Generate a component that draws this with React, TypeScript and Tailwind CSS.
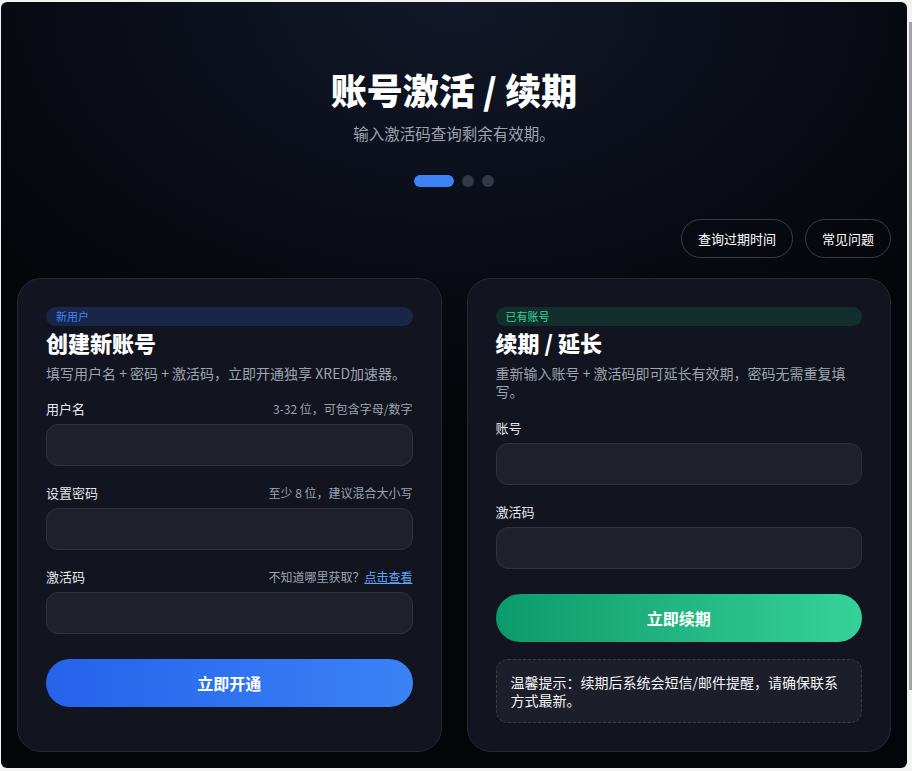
import React from 'react'

const font = { fontFamily: '"Noto Sans CJK SC", "Noto Sans", sans-serif' }

interface FieldProps {
  label: string
  hint?: React.ReactNode
}

function Field({ label, hint }: FieldProps) {
  return (
    <div className="flex flex-col">
      <div className="flex items-center justify-between h-[18px] mb-[6px]">
        <span className="text-[13px] text-[#e5e7eb]">{label}</span>
        {hint && <span className="text-[12px] text-[#9ca3af]">{hint}</span>}
      </div>
      <div className="h-[42px] rounded-xl bg-[#1e202b] border border-[#2f313e]" />
    </div>
  )
}

function Badge({ text, tone }: { text: string; tone: 'blue' | 'green' }) {
  const cls =
    tone === 'blue'
      ? 'bg-[#1a2648] text-[#3b82f6]'
      : 'bg-[#132f2d] text-[#34d399]'
  return (
    <div className={`h-[19px] rounded-full flex items-center pl-[10px] text-[11px] leading-none ${cls}`}>
      {text}
    </div>
  )
}

export default function App() {
  return (
    <div className="w-[912px] h-[771px] bg-[#f3f3f3] flex overflow-hidden" style={font}>
      <div className="ml-px mt-[2px] mb-[3px] w-[906px] rounded-md bg-[radial-gradient(ellipse_70%_55%_at_50%_0%,#121829_0%,#0a0d17_55%,#040508_100%)] flex flex-col px-4 pt-[67px]">
        <h1 className="text-center text-[36px] leading-[40px] font-black text-white">账号激活 / 续期</h1>
        <p className="text-center text-[15.5px] leading-[22px] mt-[13px] text-[#9ca3af]">输入激活码查询剩余有效期。</p>
        <div className="flex justify-center items-center gap-2 mt-[31px]">
          <span className="w-10 h-3 rounded-full bg-[#3b82f6]" />
          <span className="w-3 h-3 rounded-full bg-[#343744]" />
          <span className="w-3 h-3 rounded-full bg-[#343744]" />
        </div>
        <div className="flex justify-end gap-3 mt-8">
          <button className="h-[39px] px-4 rounded-full border border-[#3a3d49] text-[13px] text-white">查询过期时间</button>
          <button className="h-[39px] px-4 rounded-full border border-[#3a3d49] text-[13px] text-white">常见问题</button>
        </div>
        <div className="grid grid-cols-2 gap-[25px] mt-5 mb-[17px] flex-1">
          <div className="rounded-3xl bg-[#12141f] border border-[#262835] px-7 pt-7 flex flex-col">
            <Badge text="新用户" tone="blue" />
            <h2 className="text-[22px] leading-[28px] font-black text-white mt-[2px]">创建新账号</h2>
            <p className="text-[14px] leading-[19px] text-[#9ca3af] mt-[8px]">填写用户名 + 密码 + 激活码，立即开通独享 XRED加速器。</p>
            <div className="flex flex-col gap-[18px] mt-[17px]">
              <Field label="用户名" hint="3-32 位，可包含字母/数字" />
              <Field label="设置密码" hint="至少 8 位，建议混合大小写" />
              <Field
                label="激活码"
                hint={
                  <>
                    不知道哪里获取？<a className="text-[#60a5fa] underline">点击查看</a>
                  </>
                }
              />
            </div>
            <button className="mt-[25px] h-12 rounded-full bg-gradient-to-r from-[#2563eb] to-[#3b82f6] text-white text-[16px] font-bold">立即开通</button>
          </div>
          <div className="rounded-3xl bg-[#12141f] border border-[#262835] px-7 pt-7 pb-7 flex flex-col">
            <Badge text="已有账号" tone="green" />
            <h2 className="text-[22px] leading-[28px] font-black text-white mt-[2px]">续期 / 延长</h2>
            <p className="text-[14px] leading-[18px] text-[#9ca3af] mt-[8px]">重新输入账号 + 激活码即可延长有效期，密码无需重复填写。</p>
            <div className="flex flex-col gap-[18px] mt-[19px]">
              <Field label="账号" />
              <Field label="激活码" />
            </div>
            <button className="mt-[25px] h-12 rounded-full bg-gradient-to-r from-[#0b9a6b] to-[#34d399] text-white text-[16px] font-bold">立即续期</button>
            <div className="mt-[17px] rounded-xl border border-dashed border-[#3a3d4a] bg-[#1c1e2a] pl-[14px] pr-[15px] py-[13px] text-[14px] leading-[18px] text-[#f3f4f6]">
              温馨提示：续期后系统会短信/邮件提醒，请确保联系方式最新。
            </div>
          </div>
        </div>
      </div>
      <div className="w-[5px] flex flex-col items-end pt-[22px] pb-[81px] ml-auto">
        <div className="w-[3px] flex-1 bg-[#a3a3a3]" />
      </div>
    </div>
  )
}
